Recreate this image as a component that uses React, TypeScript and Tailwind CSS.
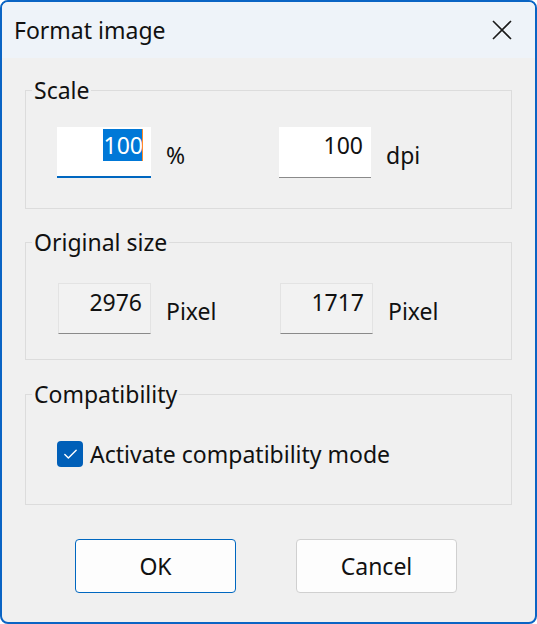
import { Check } from 'lucide-react';

function GroupBox({ title, className, children }: { title: string; className: string; children: React.ReactNode }) {
  return (
    <div className={`relative border border-[#dcdcdc] ${className}`}>
      <span className="absolute left-[6px] top-[-17px] bg-[#f0f0f0] px-[2px] leading-[32px]">{title}</span>
      {children}
    </div>
  );
}

function Field({ value, width, unit, readOnly, active, selected }: { value: string; width: string; unit: string; readOnly?: boolean; active?: boolean; selected?: boolean }) {
  const box = readOnly
    ? 'bg-[#f2f2f2] border border-[#e3e3e3] border-b-[#8a8a8a]'
    : active
      ? 'bg-white border-b-2 border-[#0067c0]'
      : 'bg-white border-b border-[#8a8a8a]';
  return (
    <div className="flex w-[222px] items-start">
      <div className={`${width} h-[51px] flex justify-end items-start pt-[2px] pr-[8px] ${box}`}>
        {selected ? (
          <span className="relative bg-[#0078d7] text-white leading-[32px] pl-[1px]">
            {value}
            <span className="absolute right-0 top-0 h-full w-px bg-[#ff8a28]" />
          </span>
        ) : (
          <span className="leading-[32px]">{value}</span>
        )}
      </div>
      <span className="ml-[15px] mt-[12px] leading-[32px]">{unit}</span>
    </div>
  );
}

export default function App() {
  return (
    <div className="w-[537px] h-[624px] rounded-[8px] border-2 border-[#0a64c4] bg-[#f0f0f0] overflow-hidden flex flex-col font-['Noto_Sans',sans-serif] text-[23px] text-[#111]">
      <div className="h-[56px] bg-[#eef3f9] flex items-center justify-between pl-[12px] pr-[23px]">
        <span className="leading-[32px]">Format image</span>
        <svg width="20" height="20" viewBox="0 0 20 20" className="text-[#1a1a1a]">
          <path d="M1 1L19 19M19 1L1 19" stroke="currentColor" strokeWidth="1.6" fill="none" />
        </svg>
      </div>

      <div className="flex flex-col px-[23px] pt-[32px]">
        <GroupBox title="Scale" className="h-[119px] pt-[36px] pl-[31px] flex">
          <Field value="100" width="w-[94px]" unit="%" active selected />
          <Field value="100" width="w-[92px]" unit="dpi" />
        </GroupBox>

        <GroupBox title="Original size" className="mt-[33px] h-[118px] pt-[40px] pl-[32px] flex">
          <Field value="2976" width="w-[93px]" unit="Pixel" readOnly />
          <Field value="1717" width="w-[93px]" unit="Pixel" readOnly />
        </GroupBox>

        <GroupBox title="Compatibility" className="mt-[34px] h-[111px] pt-[46px] pl-[31px]">
          <label className="flex items-start gap-[7px]">
            <span className="w-[26px] h-[26px] rounded-[4px] bg-[#005fb8] flex items-center justify-center">
              <Check size={17} strokeWidth={2} className="text-white" />
            </span>
            <span className="leading-[32px] -mt-[3px]">Activate compatibility mode</span>
          </label>
        </GroupBox>

        <div className="mt-[34px] flex pl-[50px] gap-[60px]">
          <button className="w-[161px] h-[54px] rounded-[4px] border border-[#0067c0] bg-[#fdfdfd] leading-[32px]">OK</button>
          <button className="w-[161px] h-[54px] rounded-[4px] border border-[#d0d0d0] bg-[#fdfdfd] leading-[32px]">Cancel</button>
        </div>
      </div>
    </div>
  );
}
